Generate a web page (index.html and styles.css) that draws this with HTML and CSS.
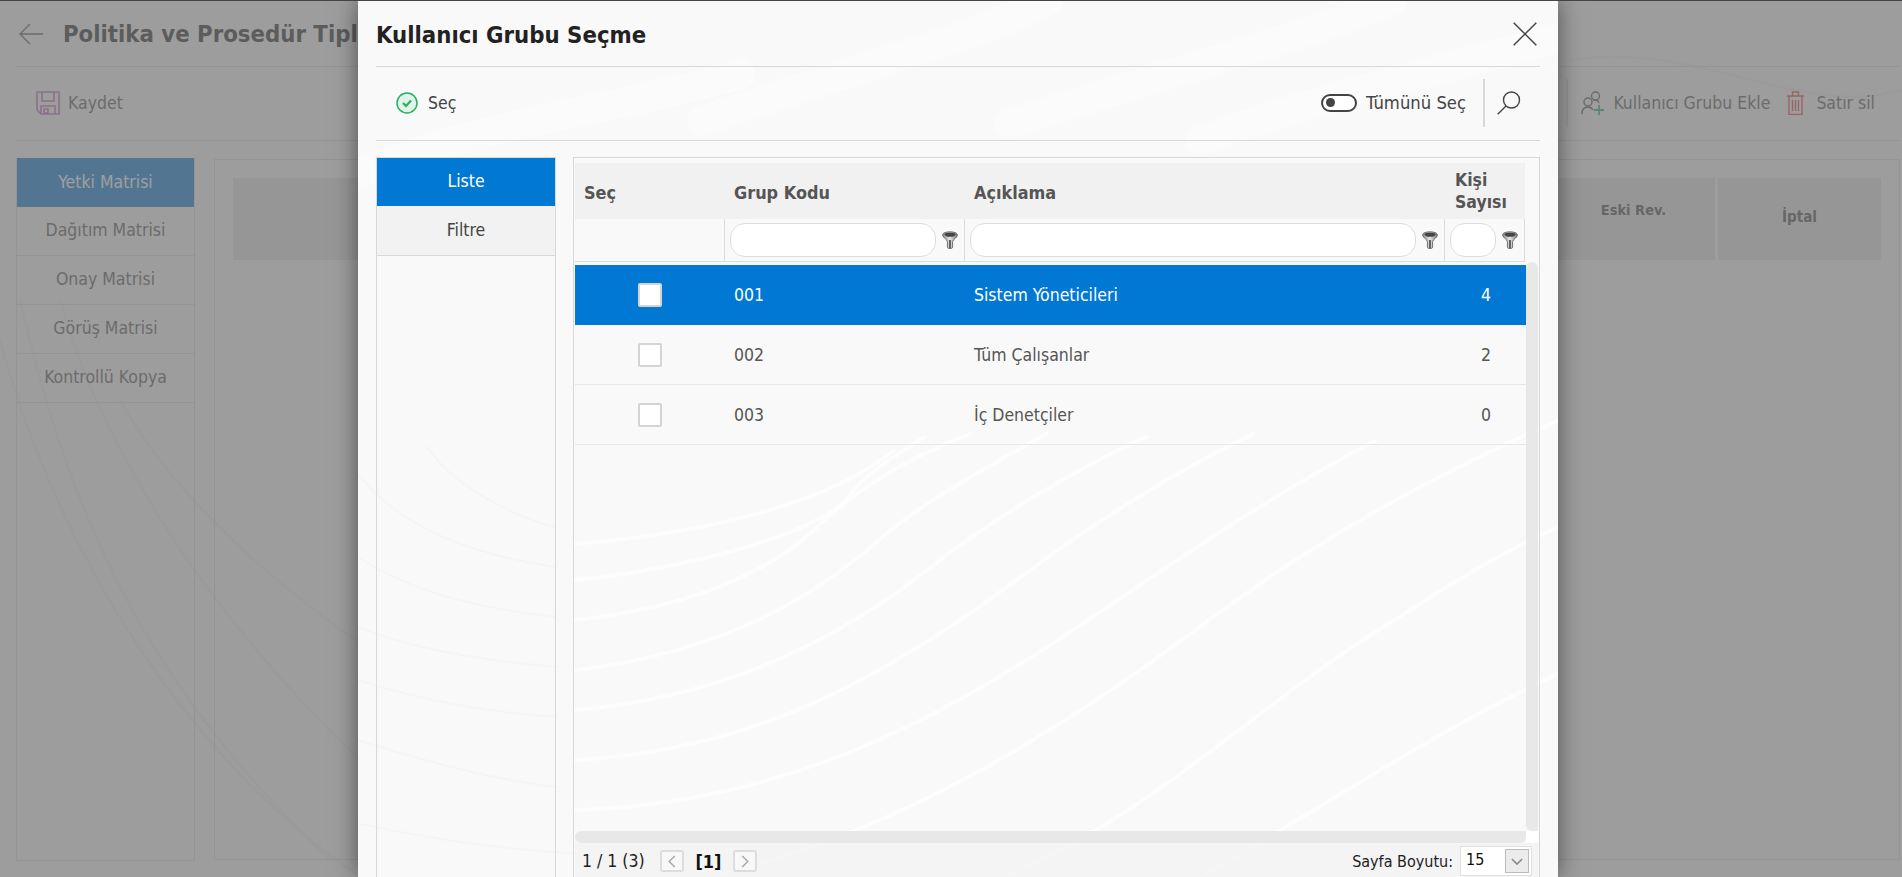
FILE: index.html
```html
<!DOCTYPE html>
<html lang="tr">
<head>
<meta charset="utf-8">
<title>Kullanıcı Grubu Seçme</title>
<link rel="stylesheet" href="styles.css">
</head>
<body>
<svg class="swoosh page-swoosh" viewBox="0 0 1902 877" preserveAspectRatio="none" aria-hidden="true">
  <path d="M0 340C60 560 190 760 360 877"/>
  <path d="M20 300C70 520 150 690 330 860"/>
  <path d="M60 300C110 480 260 700 500 877"/>
  <path d="M120 400C210 560 420 700 640 800"/>
  <path d="M1570 60C1700 40 1800 120 1902 90"/>
</svg>
<div class="page">
  <header class="page-head">
    <svg class="back-icon" viewBox="0 0 24 22"><path d="M24 11H1M11 1 1 11l10 10"/></svg>
    <h1 class="page-title">Politika ve Prosedür Tipleri</h1>
  </header>
  <div class="page-tools">
    <div class="tool">
      <svg class="ic-save" viewBox="0 0 24 24"><path d="M1 1h22v22H5l-4-4zM6 1v9h12V1M5 23v-8h14v8M8 18h4v4H8z"/></svg>
      <span>Kaydet</span>
    </div>
    <div class="tool-right">
      <div class="tool-sep"></div>
      <div class="tool">
        <svg class="ic-group" viewBox="0 0 24 24"><circle cx="14.5" cy="5" r="4"/><circle cx="7" cy="11" r="4"/><path d="M1 23c0-5 2-7 6-7 3 0 4 1 5 3M12 9c3 0 5 0 6 3"/><path class="plus" d="M18 14v10M13 19h10"/></svg>
        <span>Kullanıcı Grubu Ekle</span>
      </div>
      <div class="tool">
        <svg class="ic-trash" viewBox="0 0 19 24"><path d="M3 5h13v18.500H3zM1 5h17M6.500 5V1h6v4M6.500 9v11M9.500 9v11M12.500 9v11"/></svg>
        <span>Satır sil</span>
      </div>
    </div>
  </div>
  <main class="page-main">
    <nav class="side-tabs">
      <a class="side-tab active">Yetki Matrisi</a>
      <a class="side-tab">Dağıtım Matrisi</a>
      <a class="side-tab">Onay Matrisi</a>
      <a class="side-tab">Görüş Matrisi</a>
      <a class="side-tab">Kontrollü Kopya</a>
    </nav>
    <section class="matrix">
      <div class="matrix-head">
        <div class="mx-cell mx-wide"></div>
        <div class="mx-cell mx-eski">Eski Rev.</div>
        <div class="mx-cell mx-iptal">İptal</div>
      </div>
    </section>
  </main>
</div>
<div class="top-line"></div>
<div class="overlay"></div>

<div class="modal">
  <svg class="swoosh modal-swoosh" viewBox="0 -1320 1568 2631" preserveAspectRatio="none" aria-hidden="true">
    <g class="wide">
      <path d="M900 -1320C800 -1200 620 -1100 450 -960"/>
      <path d="M1350 -1320C1250 -1220 1050 -1100 850 -950"/>
      <path d="M1568 -1210C1450 -1130 1280 -1050 1100 -900"/>
      <path d="M500 -1100C350 -1000 150 -950 0 -800"/>
    </g>
    <g class="bright">
      <path d="M460 1311C700 1180 900 900 1100 560C1250 300 1400 110 1568 -60"/>
      <path d="M840 1311C1020 1150 1160 830 1300 620C1400 470 1480 350 1568 260"/>
      <path d="M1100 1311C1250 1120 1400 880 1568 700"/>
      <path d="M283 1110C560 1090 760 840 960 530C1100 310 1220 130 1330 0"/>
      <path d="M283 960C520 930 680 720 860 420C960 250 1070 90 1170 -20"/>
      <path d="M283 810C490 770 640 580 760 360C850 200 970 50 1030 -10"/>
      <path d="M283 690C470 640 590 480 680 300C740 180 830 70 900 -20"/>
      <path d="M283 540C440 500 540 390 600 260C650 150 710 60 800 -20"/>
      <path d="M283 420C440 380 600 280 640 170C660 110 690 60 740 -10"/>
      <path d="M283 310C400 290 600 220 700 30"/>
    </g>
    <g class="thin">
      <path d="M0 1150C100 1200 200 1230 283 1240"/>
      <path d="M0 900C80 960 180 1020 258 1040"/>
      <path d="M0 720C80 780 180 820 258 830"/>
      <path d="M0 560C60 620 160 660 258 680"/>
      <path d="M0 350C60 440 140 500 258 530"/>
      <path d="M0 100C50 250 140 340 258 380"/>
      <path d="M90 20C120 120 190 220 258 260"/>
    </g>
  </svg>
  <header class="modal-head">
    <h2 class="modal-title">Kullanıcı Grubu Seçme</h2>
    <svg class="ic-close" viewBox="0 0 24 24"><path d="M.7.7l22.600 22.600M23.300.7.7 23.300"/></svg>
  </header>
  <div class="modal-tools">
    <div class="sec-btn">
      <svg class="ic-check" viewBox="0 0 22 22"><circle cx="11" cy="11" r="10"/><path d="M7 11l3 3 5-5.500"/></svg>
      <span>Seç</span>
    </div>
    <div class="tools-right">
      <span class="toggle"><i class="knob"></i></span>
      <span class="toggle-label">Tümünü Seç</span>
      <div class="v-sep"></div>
      <svg class="ic-search" viewBox="0 0 24 24"><circle cx="14.500" cy="9" r="8"/><path d="M9 15 .7 23.300"/></svg>
    </div>
  </div>
  <div class="modal-body">
    <nav class="list-tabs">
      <a class="list-tab active">Liste</a>
      <a class="list-tab">Filtre</a>
    </nav>
    <section class="grid-panel">
      <div class="grid-head">
        <div class="g-row g-titles">
          <div class="g-cell">Seç</div>
          <div class="g-cell">Grup Kodu</div>
          <div class="g-cell">Açıklama</div>
          <div class="g-cell g-last">Kişi Sayısı</div>
        </div>
        <div class="g-row g-filters">
          <div class="f-cell"></div>
          <div class="f-cell"><span class="f-input"></span><svg class="ic-funnel" viewBox="0 0 16 18"><use href="#funnel"/></svg></div>
          <div class="f-cell"><span class="f-input"></span><svg class="ic-funnel" viewBox="0 0 16 18"><use href="#funnel"/></svg></div>
          <div class="f-cell"><span class="f-input"></span><svg class="ic-funnel" viewBox="0 0 16 18"><use href="#funnel"/></svg></div>
        </div>
      </div>
      <div class="grid-body">
        <div class="grid-rows">
          <div class="g-row d-row selected">
            <div class="d-cell d-check"><span class="check"></span></div>
            <div class="d-cell">001</div>
            <div class="d-cell">Sistem Yöneticileri</div>
            <div class="d-cell d-num">4</div>
          </div>
          <div class="g-row d-row">
            <div class="d-cell d-check"><span class="check"></span></div>
            <div class="d-cell">002</div>
            <div class="d-cell">Tüm Çalışanlar</div>
            <div class="d-cell d-num">2</div>
          </div>
          <div class="g-row d-row">
            <div class="d-cell d-check"><span class="check"></span></div>
            <div class="d-cell">003</div>
            <div class="d-cell">İç Denetçiler</div>
            <div class="d-cell d-num">0</div>
          </div>
        </div>
        <div class="v-scroll"></div>
      </div>
      <div class="h-scroll-row">
        <div class="h-scroll"></div>
        <div class="corner"></div>
      </div>
      <div class="pager">
        <span class="pg-count">1 / 1 (3)</span>
        <span class="pg-btn"><svg viewBox="0 0 10 14"><path d="M8 1 2 7l6 6"/></svg></span>
        <b class="pg-cur">[1]</b>
        <span class="pg-btn"><svg viewBox="0 0 10 14"><path d="M2 1l6 6-6 6"/></svg></span>
        <span class="pg-size-label">Sayfa Boyutu:</span>
        <div class="pg-select">
          <span class="pg-val">15</span>
          <span class="pg-arrow"><svg viewBox="0 0 14 8"><path d="M1 1l6 6 6-6"/></svg></span>
        </div>
      </div>
    </section>
  </div>
</div>

<svg class="defs" aria-hidden="true">
  <defs>
    <linearGradient id="fg" x1="0" x2="1" y1="0" y2="0">
      <stop offset="0" stop-color="#8a8a8a"/>
      <stop offset=".5" stop-color="#e4e4e4"/>
      <stop offset="1" stop-color="#777"/>
    </linearGradient>
    <g id="funnel">
      <path d="M.6 4C.6 2 4 .8 8 .8S15.400 2 15.400 4c0 2.500-4 4-4.800 6.500v5.800c0 .8-1 1.200-2.600 1.200s-2.600-.4-2.600-1.200v-5.800C5 8 .6 6.500.6 4z" fill="url(#fg)" stroke="#555" stroke-width=".8"/>
      <ellipse cx="8" cy="3.600" rx="5.500" ry="2.200" fill="#444"/>
      <path d="M8 9v8" stroke="#444" stroke-width="1.600"/>
    </g>
  </defs>
</svg>
</body>
</html>
```

FILE: styles.css
```css
* { box-sizing: border-box; }

html, body {
  margin: 0;
  height: 877px;
  overflow: hidden;
}

body {
  position: relative;
  background: #fafafa;
  color: #555;
  font-family: "DejaVu Sans", "Noto Sans", sans-serif;
  font-stretch: condensed;
  font-size: 17.5px;
}

.defs { position: absolute; width: 0; height: 0; }

.swoosh {
  position: absolute;
  fill: none;
  stroke-linecap: round;
  pointer-events: none;
}
.swoosh path { vector-effect: non-scaling-stroke; }

.page-swoosh {
  left: 0; top: 0; width: 1902px; height: 877px;
  stroke: #f1f1f1;
  stroke-width: 2;
}

/* ---------- page behind the dialog ---------- */
.page {
  position: relative;
  height: 877px;
  padding: 1px 2px 0 16px;
  display: flex;
  flex-direction: column;
}
.page-head {
  height: 66px;
  flex: none;
  display: flex;
  align-items: center;
  gap: 20px;
  padding: 1px 0 0 3px;
  border-bottom: 1px solid #ddd;
}
.back-icon {
  width: 24px; height: 22px;
  fill: none; stroke: #555; stroke-width: 1.4;
}
.page-title {
  margin: 0;
  font-size: 23.7px;
  font-weight: 700;
  color: #222;
  white-space: nowrap;
}
.page-tools {
  height: 74px;
  flex: none;
  display: flex;
  align-items: center;
  justify-content: space-between;
  padding: 0 25px 2px 20px;
  border-bottom: 1px solid #ddd;
}
.tool {
  display: flex;
  align-items: center;
  gap: 8px;
  color: #555;
}
.tool-right {
  display: flex;
  align-items: center;
  gap: 11px;
}
.tool-right .tool:last-child { margin-left: 5px; gap: 11px; }
.tool-sep { width: 2px; height: 48px; background: #ddd; margin-right: 2px; }
.ic-save { width: 24px; height: 24px; fill: none; stroke: #c46bb8; stroke-width: 1.6; }
.ic-group { width: 24px; height: 24px; fill: none; stroke: #555; stroke-width: 1.4; }
.ic-group .plus { stroke: #1db060; stroke-width: 1.8; }
.ic-trash { width: 19px; height: 24px; fill: none; stroke: #f04040; stroke-width: 1.4; }

.page-main {
  flex: 1;
  display: flex;
  gap: 19px;
  padding: 17px 0 16px 0;
}
.side-tabs {
  width: 179px;
  flex: none;
  border: 1px solid #ddd;
  border-top: 0;
  display: flex;
  flex-direction: column;
}
.side-tab {
  height: 49px;
  flex: none;
  display: flex;
  align-items: center;
  justify-content: center;
  padding-bottom: 2px;
  border-bottom: 1px solid #ddd;
  color: #555;
}
.side-tab.active { background: #0078d4; color: #fff; border-bottom: 0; }

.matrix {
  flex: 1;
  margin-top: 1px;
  margin-bottom: 1px;
  border: 1px solid #ddd;
  padding: 18px 18px 0 18px;
}
.matrix-head {
  display: flex;
  gap: 3px;
  height: 82px;
}
.mx-cell {
  background: #e4e4e4;
  display: flex;
  justify-content: center;
  font-weight: 700;
  font-size: 14.5px;
  color: #444;
}
.mx-wide { flex: 1; }
.mx-eski { width: 163px; padding-top: 24px; }
.mx-iptal { width: 163px; align-items: center; padding-bottom: 5px; font-size: 15px; }

.top-line {
  position: absolute;
  left: 0; top: 0; right: 0;
  height: 1px;
  background: #444;
  z-index: 3;
}
.overlay {
  position: absolute;
  inset: 0;
  background: rgba(117, 117, 117, .7);
  z-index: 1;
}

/* ---------- dialog ---------- */
.modal {
  position: absolute;
  left: 358px;
  top: 1px;
  width: 1200px;
  height: 876px;
  z-index: 2;
  background: #f9f9f9;
  box-shadow: 0 0 22px rgba(0, 0, 0, .5);
  padding: 0 18px;
  display: flex;
  flex-direction: column;
  color: #444;
}
.modal-swoosh {
  left: 0; top: 0; width: 100%; height: 100%;
  stroke: #fff;
}
.modal-swoosh .bright { stroke-width: 4; stroke-opacity: .6; }
.modal-swoosh .thin { stroke: #f5f5f5; stroke-width: 2; }
.modal-swoosh .wide { stroke-width: 30; stroke-opacity: .3; }

.modal-head {
  position: relative;
  height: 66px;
  flex: none;
  display: flex;
  align-items: center;
  justify-content: space-between;
  padding: 5px 3px 3px 0;
  border-bottom: 1px solid #d8d8d8;
}
.modal-title {
  margin: 0;
  font-size: 23.7px;
  font-weight: 700;
  color: #222;
}
.ic-close { width: 24px; height: 24px; fill: none; stroke: #444; stroke-width: 1.5; margin-bottom: 2px; }

.modal-tools {
  position: relative;
  height: 74px;
  flex: none;
  display: flex;
  align-items: center;
  justify-content: space-between;
  padding: 0 19px 2px 20px;
  border-bottom: 1px solid #d8d8d8;
}
.sec-btn { display: flex; align-items: center; gap: 10px; color: #444; }
.ic-check { width: 22px; height: 22px; fill: #e2f3e8; stroke: #22b35e; stroke-width: 1.5; }
.ic-check path { fill: none; stroke-width: 2.2; }
.tools-right { display: flex; align-items: center; }
.toggle {
  width: 36px; height: 18px;
  border: 2.500px solid #444;
  border-radius: 9px;
  display: flex;
  align-items: center;
  padding-left: 3px;
  background: #fff;
}
.knob { width: 9px; height: 9px; border-radius: 50%; background: #444; }
.toggle-label { margin-left: 9px; color: #444; font-size: 18.3px; }
.v-sep { width: 2px; height: 48px; background: #d8d8d8; margin: 0 12px 0 17px; }
.ic-search { width: 24px; height: 24px; fill: none; stroke: #444; stroke-width: 1.4; }

.modal-body {
  position: relative;
  flex: 1;
  min-height: 0;
  display: flex;
  gap: 17px;
  padding-top: 16px;
}
.list-tabs {
  width: 180px;
  flex: none;
  margin-bottom: -20px;
  border: 1px solid #d8d8d8;
  display: flex;
  flex-direction: column;
}
.list-tab {
  height: 50px;
  flex: none;
  display: flex;
  align-items: center;
  justify-content: center;
  padding-bottom: 2px;
  background: #f2f2f2;
  border-bottom: 1px solid #d8d8d8;
  color: #444;
}
.list-tab.active { background: #0078d4; color: #fff; border-bottom: 0; height: 48px; }

.grid-panel {
  width: 967px;
  flex: none;
  margin-bottom: -1px;
  border: 1px solid #d8d8d8;
  padding: 5px 0 0 1px;
  display: flex;
  flex-direction: column;
}
.grid-head { width: 950px; flex: none; }
.g-row {
  display: grid;
  grid-template-columns: 150px 240px 480px 80px;
}
.g-titles {
  height: 56px;
  padding-top: 2px;
  background: #f1f1f1;
  align-items: center;
  font-weight: 700;
  font-size: 17.9px;
  color: #555;
}
.g-cell { padding-left: 9px; }
.g-last { padding-left: 10px; width: 72px; line-height: 22px; margin-top: -2px; font-size: 17.5px; }
.g-filters {
  height: 43px;
  border-bottom: 1px solid #ddd;
}
.f-cell {
  display: flex;
  border-right: 1px solid #ddd;
  padding: 4px 0 4px 5px;
}
.f-input {
  flex: 1;
  min-width: 0;
  background: #fff;
  border: 1px solid #ddd;
  border-radius: 15px;
}
.ic-funnel { width: 28px; height: 18px; flex: none; align-self: center; }

.grid-body { flex: 1; min-height: 0; display: flex; }
.grid-rows { width: 951px; flex: none; padding-top: 3px; }
.d-row {
  height: 60px;
  border-bottom: 1px solid #e8e8e8;
  align-items: center;
  color: #555;
}
.d-row.selected { background: #0078d4; color: #fff; border-bottom: 0; }
.d-cell { padding-left: 9px; }
.d-check { padding: 0; display: flex; justify-content: center; }
.d-num { padding: 0 34px 0 0; text-align: right; }
.check {
  width: 24px; height: 24px;
  background: #fff;
  border: 2px solid #d4d4d4;
  border-radius: 2px;
}
.v-scroll {
  width: 12px;
  background: #e8e8e8;
  border-radius: 6px 6px 0 6px;
}
.h-scroll-row { height: 12px; flex: none; display: flex; }
.h-scroll { width: 951px; background: #e8e8e8; border-radius: 6px 0 6px 6px; }
.corner { width: 12px; background: #fff; }

.pager {
  height: 34px;
  flex: none;
  display: flex;
  align-items: center;
  padding: 2px 7px 0 7px;
  background: rgba(240, 240, 240, .6);
  color: #222;
  font-size: 16px;
}
.pg-count { width: 78px; font-size: 17.5px; white-space: nowrap; }
.pg-btn {
  width: 24px; height: 22px;
  border: 2px solid #ddd;
  border-radius: 3px;
  background: #f8f8f8;
  display: flex;
  align-items: center;
  justify-content: center;
}
.pg-btn svg { width: 10px; height: 13px; fill: none; stroke: #aaa; stroke-width: 1.600; }
.pg-cur { width: 49px; text-align: center; color: #111; font-size: 18px; }
.pg-size-label { margin-left: auto; margin-right: 7px; }
.pg-select {
  width: 72px; height: 30px;
  background: #fff;
  border: 1px solid #e0e0e0;
  display: flex;
  align-items: center;
  justify-content: space-between;
  padding: 0 2px 0 5px;
}
.pg-val { color: #111; margin-bottom: 4px; }
.pg-arrow {
  width: 24px; height: 24px;
  background: #ececec;
  border: 1px solid #bbb;
  display: flex;
  align-items: center;
  justify-content: center;
}
.pg-arrow svg { width: 12px; height: 7px; fill: none; stroke: #888; stroke-width: 1.800; }
```
